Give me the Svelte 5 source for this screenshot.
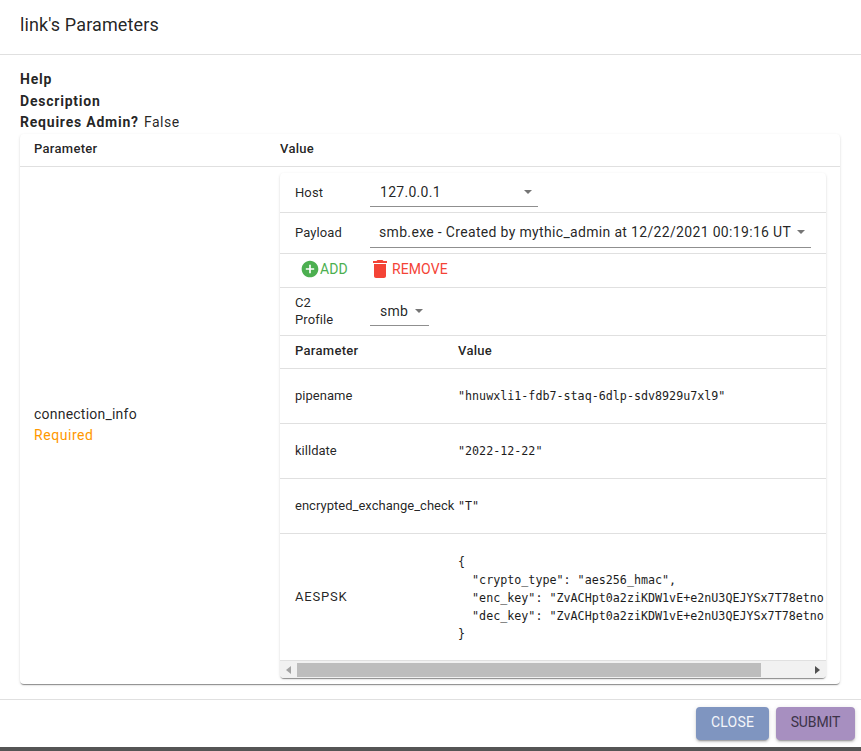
<script>
	const paramRows = [
		{ name: 'pipename', value: '"hnuwxli1-fdb7-staq-6dlp-sdv8929u7xl9"', height: 55 },
		{ name: 'killdate', value: '"2022-12-22"', height: 55 },
		{ name: 'encrypted_exchange_check', value: '"T"', height: 55 }
	];
	const aespsk = `{
  "crypto_type": "aes256_hmac",
  "enc_key": "ZvACHpt0a2ziKDW1vE+e2nU3QEJYSx7T78etno
  "dec_key": "ZvACHpt0a2ziKDW1vE+e2nU3QEJYSx7T78etno
}`;
</script>

<div class="dialog">
	<header class="title">link's Parameters</header>

	<main class="content">
		<div class="meta"><b>Help</b></div>
		<div class="meta"><b>Description</b></div>
		<div class="meta"><b>Requires Admin?</b> <span class="flag">False</span></div>

		<section class="outer">
			<div class="outer-head">
				<div class="col-param">Parameter</div>
				<div class="col-value">Value</div>
			</div>
			<div class="outer-body">
				<div class="param-cell">
					<div>connection_info</div>
					<div class="required">Required</div>
				</div>
				<div class="inner">
					<div class="inner-scroll">
						<div class="row row-host">
							<div class="label">Host</div>
							<div class="select host"><span>127.0.0.1</span><i class="caret"></i></div>
						</div>
						<div class="row row-payload">
							<div class="label">Payload</div>
							<div class="select payload"><span class="clip">smb.exe - Created by mythic_admin at 12/22/2021 00:19:16 UTC</span><i class="caret"></i></div>
						</div>
						<div class="row row-actions">
							<button class="action add">
								<svg width="20" height="20" viewBox="0 0 24 24"><path fill="#4caf50" d="M12 2C6.48 2 2 6.48 2 12s4.48 10 10 10 10-4.48 10-10S17.52 2 12 2zm5 11h-4v4h-2v-4H7v-2h4V7h2v4h4v2z"/></svg>
								ADD
							</button>
							<button class="action remove">
								<svg width="24" height="24" viewBox="0 0 24 24"><path fill="#f44336" d="M6 19c0 1.1.9 2 2 2h8c1.1 0 2-.9 2-2V7H6v12zM19 4h-3.500l-1-1h-5l-1 1H5v2h14V4z"/></svg>
								REMOVE
							</button>
						</div>
						<div class="row row-profile">
							<div class="label narrow">C2 Profile</div>
							<div class="select profile"><span>smb</span><i class="caret"></i></div>
						</div>
						<div class="grid-row grid-head">
							<div>Parameter</div>
							<div>Value</div>
						</div>
						{#each paramRows as p}
							<div class="grid-row" style="height: {p.height}px">
								<div class="name">{p.name}</div>
								<pre>{p.value}</pre>
							</div>
						{/each}
						<div class="grid-row aes">
							<div class="name">AESPSK</div>
							<pre>{aespsk}</pre>
						</div>
					</div>
					<div class="scrollbar">
						<svg class="arrow" width="6" height="8" viewBox="0 0 6 8"><path fill="#a3a3a3" d="M5 0v8L0 4z"/></svg>
						<div class="track"><div class="thumb"></div></div>
						<svg class="arrow" width="6" height="8" viewBox="0 0 6 8"><path fill="#505050" d="M1 0v8l5-4z"/></svg>
					</div>
				</div>
			</div>
		</section>
	</main>

	<footer class="actions">
		<button class="btn close">CLOSE</button>
		<button class="btn submit">SUBMIT</button>
	</footer>
</div>
<div class="backdrop"></div>

<style>
	:global(body) {
		margin: 0;
		background: #fff;
		overflow: hidden;
	}

	.dialog {
		height: 747px;
		display: flex;
		flex-direction: column;
		font-family: Roboto, sans-serif;
		font-size: 14px;
		color: rgba(0, 0, 0, 0.87);
		background: #fff;
	}

	.backdrop {
		height: 4px;
		background: #555;
	}

	.title {
		box-sizing: border-box;
		padding: 14px 20px 0;
		font-size: 18px;
		line-height: 21px;
		letter-spacing: 0.12px;
		border-bottom: 1px solid #e0e0e0;
		height: 55px;
		flex: none;
	}

	.content {
		flex: 1;
		padding: 14px 21px 0 20px;
		min-height: 0;
	}

	.meta {
		line-height: 21.5px;
		font-size: 14px;
		letter-spacing: 0.55px;
	}

	.meta b {
		font-weight: 700;
		letter-spacing: 0.78px;
	}

	.flag {
		margin-left: 1px;
	}

	.outer {
		margin-top: 0.5px;
		height: 550px;
		box-sizing: border-box;
		border-radius: 4px;
		background: #fff;
		box-shadow: 0 2px 1px -1px rgba(0, 0, 0, 0.3), 0 1px 1px 0 rgba(0, 0, 0, 0.14), 0 1px 3px 0 rgba(0, 0, 0, 0.12);
		overflow: hidden;
		display: flex;
		flex-direction: column;
	}

	.outer-head {
		height: 33px;
		flex: none;
		display: flex;
		align-items: center;
		box-sizing: border-box;
		padding-bottom: 4px;
		font-weight: 500;
		font-size: 13px;
		letter-spacing: 0.3px;
		border-bottom: 1px solid #e0e0e0;
	}

	.col-param {
		width: 246px;
		padding-left: 14px;
	}

	.outer-body {
		flex: 1;
		display: flex;
		min-height: 0;
	}

	.param-cell {
		width: 260px;
		flex: none;
		box-sizing: border-box;
		padding-left: 14px;
		align-self: center;
		line-height: 21px;
		margin-top: -2px;
		letter-spacing: 0.22px;
	}

	.required {
		color: #ff9800;
		letter-spacing: 0.55px;
	}

	.inner {
		width: 546px;
		flex: none;
		margin-top: 6px;
		height: 505px;
		border-radius: 4px;
		box-shadow: 0 2px 1px -1px rgba(0, 0, 0, 0.3), 0 1px 1px 0 rgba(0, 0, 0, 0.14), 0 1px 3px 0 rgba(0, 0, 0, 0.12);
		overflow: hidden;
		display: flex;
		flex-direction: column;
	}

	.inner-scroll {
		flex: 1;
		overflow: hidden;
		min-height: 0;
	}

	.row {
		display: flex;
		align-items: center;
		box-sizing: border-box;
		border-bottom: 1px solid #e0e0e0;
		padding-left: 15px;
		font-size: 13px;
		letter-spacing: 0.1px;
	}

	.row-host { height: 40px; padding-bottom: 1px; }
	.row-payload { height: 41px; padding-bottom: 1px; }
	.row-actions { height: 34px; padding-left: 13px; padding-bottom: 3px; }
	.row-profile { height: 48px; padding-bottom: 1px; }

	.label {
		width: 75px;
		flex: none;
		line-height: 17px;
	}

	.label.narrow {
		width: 75px;
		padding-right: 30px;
		box-sizing: border-box;
	}

	.select {
		display: flex;
		align-items: center;
		justify-content: space-between;
		box-sizing: border-box;
		height: 30px;
		padding: 0 5px 0 10px;
		font-size: 14px;
		letter-spacing: 0.02em;
		border-bottom: 1px solid #8f8f8f;
	}

	.select.host { width: 168px; }
	.select.payload { width: 441px; padding-left: 9px; letter-spacing: 0.33px; }
	.select.profile { width: 59px; padding-right: 5px; }

	.clip {
		flex: 1;
		min-width: 0;
		white-space: nowrap;
		overflow: hidden;
	}

	.caret {
		flex: none;
		margin: 0 1px 0 6px;
		width: 0;
		height: 0;
		border-left: 4.5px solid transparent;
		border-right: 4.5px solid transparent;
		border-top: 4.5px solid #757575;
	}

	.action {
		display: flex;
		align-items: center;
		background: none;
		border: 0;
		padding: 0 6px;
		font: inherit;
		font-size: 14px;
		letter-spacing: 0.1px;
		line-height: 20px;
	}

	.add { color: #4caf50; margin-left: 1px; width: 74px; }
	.remove { color: #f44336; padding-left: 0; }

	.grid-row {
		display: grid;
		grid-template-columns: 163px 1fr;
		align-items: center;
		box-sizing: border-box;
		padding-left: 15px;
		border-bottom: 1px solid #e0e0e0;
		white-space: nowrap;
		font-size: 13px;
		letter-spacing: 0.02px;
	}

	.name {
		margin-bottom: 2px;
	}

	.aes .name {
		letter-spacing: 0.8px;
	}

	.grid-head {
		height: 33px;
		padding-bottom: 3px;
		font-weight: 500;
		letter-spacing: 0.3px;
		color: rgba(0, 0, 0, 0.87);
	}

	.aes {
		height: 127px;
		border-bottom: 0;
	}

	pre {
		margin: 0;
		font-family: "DejaVu Sans Mono", monospace;
		font-size: 11.7px;
		line-height: 18px;
		color: #1c1c1c;
		letter-spacing: 0;
	}

	.scrollbar {
		height: 18px;
		flex: none;
		display: flex;
		align-items: center;
		background: #f1f1f1;
		border-top: 1px solid #e0e0e0;
		box-sizing: border-box;
	}

	.arrow {
		flex: none;
		margin: 0 6px;
	}

	.track {
		flex: 1;
		height: 14px;
		margin-left: -1px;
	}

	.thumb {
		width: 464px;
		height: 14px;
		background: #bdbdbd;
	}

	.actions {
		height: 48px;
		flex: none;
		box-sizing: border-box;
		border-top: 1px solid #e0e0e0;
		display: flex;
		justify-content: flex-end;
		gap: 7px;
		padding: 7px 6px 0 0;
	}

	.btn {
		height: 33px;
		border: 0;
		border-radius: 4px;
		font-family: Roboto, sans-serif;
		font-size: 14px;
		font-weight: 400;
		box-shadow: 0 3px 1px -2px rgba(0, 0, 0, 0.2), 0 2px 2px 0 rgba(0, 0, 0, 0.14), 0 1px 5px 0 rgba(0, 0, 0, 0.12);
		padding: 0 0 3px;
	}

	.close { width: 73px; background: #7f95c0; color: #f4f6fa; letter-spacing: 0.2px; }
	.submit { width: 79px; background: #a78fc0; color: #3c3348; letter-spacing: -0.1px; }
</style>
